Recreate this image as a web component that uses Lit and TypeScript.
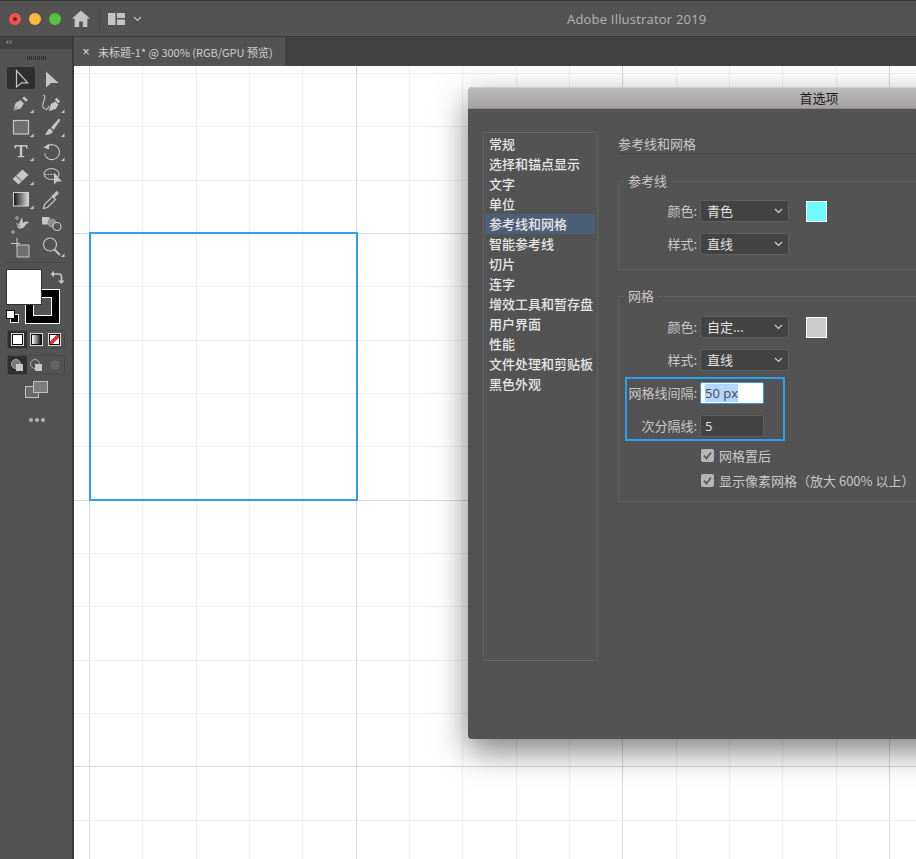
import { LitElement, css, html, svg } from 'lit';
import { customElement } from 'lit/decorators.js';

const GRID_STEP = 160 / 3;
const ICON = '#c6c6c6';

const corner = svg`<path d="M23 22h3.5v-3.5z" fill="${ICON}"/>`;

interface Tool {
  name: string;
  art: unknown;
  more?: boolean;
  active?: boolean;
}

const TOOLS: Tool[] = [
  { name: 'selection', active: true, art: svg`<path d="M9.5 3.5v16.5l5-4.2h6.2z" fill="none" stroke="${ICON}" stroke-width="1.2"/>` },
  { name: 'direct', art: svg`<path d="M8 4.5v16l5-4.4h7.5z" fill="${ICON}"/>` },
  { name: 'pen', more: true, art: svg`<path d="M6 20l2.3-8.2 5.2-3 3.6 3.6-3 5.2zM6.5 19.5l4.2-4.2M15 7.3l2.2-2.2 4 4-2.2 2.2z" fill="${ICON}" stroke="#535353" stroke-width=".7"/>` },
  { name: 'curvature', more: true, art: svg`<path d="M11 20l1.8-7 4.4-2.6 3.2 3.2-2.6 4.4zM16.8 8.8l1.8-2 3.6 3.6-2 1.8z" fill="${ICON}"/><path d="M5 4c5 2-2 8 0 12s5 3 6-1" fill="none" stroke="${ICON}" stroke-width="1.1"/>` },
  { name: 'rect', more: true, art: svg`<rect x="6.5" y="5.5" width="15" height="13.5" fill="#6f6f6f" stroke="${ICON}" stroke-width="1.2"/>` },
  { name: 'brush', more: true, art: svg`<path d="M20.5 4L13 12.5l2.6 2.4 6.4-9.4c.4-1-.7-2-1.5-1.5z" fill="${ICON}"/><path d="M12 13.5l2.8 2.6c-.6 3-3.8 4.2-8.3 3.6 2.5-1.200 2.200-4.800 5.500-6.200z" fill="${ICON}"/>` },
  { name: 'type', more: true, art: svg`<path d="M7.500 6h13v3.500h-1.200l-.6-2h-3.500v9.500h2v1.300h-6.400V17h2V7.500H9.300l-.6 2H7.500z" fill="${ICON}"/>` },
  { name: 'rotate', more: true, art: svg`<path d="M9 7.500a7.500 7.500 0 1 1-2.500 6" fill="none" stroke="${ICON}" stroke-width="1.100"/><path d="M6.500 13.500a7.500 7.500 0 0 0 13 3.500" fill="none" stroke="#535353" stroke-width="1.100" stroke-dasharray="1.500 1.500"/><path d="M5.500 8.500l5.500-4v6z" fill="${ICON}"/>` },
  { name: 'eraser', more: true, art: svg`<path d="M6 15.500L15.500 6.500l6 5.500-9.500 9z" fill="${ICON}"/><path d="M9 12.700l5.800 5.600" stroke="#535353" stroke-width="1"/><path d="M6 15.500l6 5.500" stroke="${ICON}" stroke-width="1.200"/>` },
  { name: 'shapebuilder', art: svg`<path d="M6 11a7.500 5.500 0 1 1 15 0 7.500 5.500 0 1 1-15 0z" fill="none" stroke="${ICON}" stroke-width="1.100"/><path d="M7 11.500h9" stroke="${ICON}" stroke-width="1.200" stroke-dasharray="1.500 1.200"/><path d="M16 9.500v12l3-3h5z" fill="${ICON}"/>` },
  { name: 'gradient', more: true, art: svg`<defs><linearGradient id="toolgrad"><stop offset="0" stop-color="#111"/><stop offset="1" stop-color="#ddd"/></linearGradient></defs><rect x="6.500" y="5.500" width="15" height="13.500" fill="url(#toolgrad)" stroke="#d0d0d0" stroke-width="1"/>` },
  { name: 'eyedropper', art: svg`<path d="M5.500 21.500l1-4 8-8 3 3-8 8z" fill="none" stroke="${ICON}" stroke-width="1.200"/><path d="M13.500 8.500l2 -1 2.500-3c1-1 3.500 1 2.500 2.500l-3 2.500-1 2z" fill="${ICON}"/>` },
  { name: 'puppet', art: svg`<path d="M6 21l5-4-2-6 3 2 3-7c.5 3 .5 5 1 6 2-2 5-2 6 0-2 0-3 1-4 3-2 3-5 3-7 2z" fill="${ICON}"/><circle cx="6" cy="21" r="1.300" fill="#535353" stroke="${ICON}" stroke-width=".8"/><circle cx="10" cy="7" r="1.300" fill="#535353" stroke="${ICON}" stroke-width=".8"/><path d="M9 11l4 5" stroke="#535353" stroke-width=".8"/>` },
  { name: 'blend', art: svg`<rect x="4" y="6" width="7.500" height="7.500" fill="${ICON}"/><circle cx="14" cy="12" r="4.500" fill="#8f8f8f"/><circle cx="19" cy="15.500" r="4" fill="#535353" stroke="${ICON}" stroke-width="1.200"/>` },
  { name: 'artboard', art: svg`<path d="M10 10h12v12H10z" fill="#6f6f6f" stroke="${ICON}" stroke-width="1"/><path d="M10 3v9M4 8.500h9" stroke="${ICON}" stroke-width="1"/>` },
  { name: 'zoom', more: true, art: svg`<circle cx="12" cy="9.500" r="6.500" fill="none" stroke="${ICON}" stroke-width="1.200"/><path d="M16.500 14.500l5.500 5.500" stroke="${ICON}" stroke-width="2"/>` },
];

const PREF_PAGES = [
  '常规', '选择和锚点显示', '文字', '单位', '参考线和网格', '智能参考线', '切片', '连字',
  '增效工具和暂存盘', '用户界面', '性能', '文件处理和剪贴板', '黑色外观',
];

@customElement('app-root')
export class AppRoot extends LitElement {
  static styles = css`
    :host {
      display: block;
      width: 916px;
      height: 859px;
      overflow: hidden;
      background: #535353;
      font-family: "Noto Sans CJK SC", "Noto Sans", sans-serif;
      font-size: 13px;
    }

    .window {
      display: flex;
      flex-direction: column;
      height: 100%;
    }

    /* title bar */
    .titlebar {
      flex: 0 0 37px;
      box-sizing: border-box;
      display: flex;
      align-items: center;
      background: #535353;
      border-top: 1px solid #3a3a3a;
      border-bottom: 1px solid #3c3c3c;
      padding-left: 9px;
    }
    .light {
      width: 12px;
      height: 12px;
      border-radius: 50%;
      margin-right: 8px;
      display: flex;
      align-items: center;
      justify-content: center;
    }
    .light.red { background: #f0534f; }
    .light.red::after {
      content: '';
      width: 4px;
      height: 4px;
      border-radius: 50%;
      background: #7d1a16;
    }
    .light.amber { background: #f8b73d; }
    .light.green { background: #55c13f; }
    .home { margin-left: 3px; }
    .divider {
      width: 1px;
      height: 21px;
      background: #474747;
      margin: 0 8px 0 9px;
    }
    .chev { margin-left: 7px; }
    .app-title {
      margin-left: 425px;
      color: #b4b4b4;
      font-family: "Open Sans", "Noto Sans", sans-serif;
      font-size: 13px;
      letter-spacing: 0.2px;
    }

    .body {
      flex: 1;
      display: flex;
      min-height: 0;
    }

    /* tools */
    .toolbar {
      flex: 0 0 72px;
      background: #535353;
      display: flex;
      flex-direction: column;
      align-items: stretch;
    }
    .collapse {
      height: 12px;
      background: #434343;
      color: #b0b0b0;
      font-size: 9px;
      line-height: 11px;
      padding-left: 6px;
      font-family: "Liberation Sans", sans-serif;
    }
    .grip {
      height: 18px;
      display: flex;
      justify-content: center;
      align-items: center;
      gap: 1px;
    }
    .grip span {
      width: 1px;
      height: 4px;
      background: #2f2f2f;
    }
    .tools {
      display: grid;
      grid-template-columns: 28px 28px;
      grid-auto-rows: 24px;
      column-gap: 3px;
      padding-left: 7px;
    }
    .tool {
      width: 28px;
      height: 24px;
      border-radius: 2px;
      display: block;
    }
    .tool.active {
      background: #2f2f2f;
      height: 22px;
      overflow: hidden;
    }
    .rule {
      height: 1px;
      background: #474747;
      margin: 3px 6px 0;
    }
    .colors {
      position: relative;
      height: 61px;
    }
    .fill, .stroke {
      position: absolute;
      box-sizing: border-box;
    }
    .fill {
      left: 6px;
      top: 6px;
      width: 36px;
      height: 36px;
      background: #fff;
      border: 1px solid #333;
      z-index: 1;
    }
    .stroke {
      left: 25px;
      top: 26px;
      width: 35px;
      height: 35px;
      background: #000;
      border: 1px solid #fff;
    }
    .stroke::after {
      content: '';
      position: absolute;
      left: 7px;
      top: 7px;
      width: 19px;
      height: 19px;
      background: #535353;
      border: 1px solid #fff;
      box-sizing: border-box;
    }
    .swap { position: absolute; left: 50px; top: 7px; }
    .defaults { position: absolute; left: 6px; top: 47px; }
    .btn-row {
      display: flex;
      box-sizing: border-box;
      margin: 6px 7px 0;
      width: 58px;
      height: 19px;
      border: 1px solid #484848;
      border-radius: 2px;
    }
    .btn-row.draw { height: 20px; margin-top: 6px; }
    .btn-row > div {
      flex: 1;
      display: flex;
      align-items: center;
      justify-content: center;
    }
    .btn-row > div.on { background: #303030; }
    .mode {
      width: 11px;
      height: 11px;
      box-sizing: border-box;
      border: 1px solid #111;
      outline: 1px solid #d8d8d8;
    }
    .mode.white { background: #fff; }
    .mode.grad { background: linear-gradient(90deg, #fff, #111); }
    .mode.none {
      background: linear-gradient(135deg, #fff 38%, #e8322c 38%, #e8322c 62%, #fff 62%);
    }
    .screen { display: block; margin: 6px 0 0 25px; }
    .dots {
      display: flex;
      gap: 2px;
      margin: 20px 0 0 29px;
    }
    .dots span {
      width: 4px;
      height: 4px;
      border-radius: 50%;
      background: #b4b4b4;
    }

    /* document */
    .doc {
      flex: 1;
      min-width: 0;
      display: flex;
      flex-direction: column;
      border-left: 2px solid #3a3a3a;
    }
    .tabbar {
      flex: 0 0 29px;
      background: #424242;
      display: flex;
    }
    .tab {
      width: 211px;
      background: #535353;
      display: flex;
      align-items: center;
      color: #cfcfcf;
      font-size: 11px;
      white-space: nowrap;
    }
    .tab .close {
      width: 24px;
      text-align: center;
      font-family: "Liberation Sans", sans-serif;
      font-size: 12px;
      color: #e0e0e0;
    }
    .canvas {
      flex: 1;
      position: relative;
      background: #fff;
      overflow: hidden;
    }
    .grid {
      position: absolute;
      inset: 0;
      width: 100%;
      height: 100%;
    }
    .artboard {
      position: absolute;
      left: 15px;
      top: 166px;
      width: 269px;
      height: 269px;
      box-sizing: border-box;
      border: 2px solid #2c9ff0;
    }

    /* preferences */
    .dialog {
      position: absolute;
      left: 394px;
      top: 21px;
      width: 702px;
      height: 652px;
      display: flex;
      flex-direction: column;
      background: #535353;
      border-radius: 5px 5px 4px 4px;
      box-shadow: 0 12px 32px rgba(0, 0, 0, 0.5);
      overflow: hidden;
    }
    .dialog-title {
      flex: 0 0 22px;
      box-sizing: border-box;
      background: linear-gradient(#bcbabb, #a3a1a2);
      border-top: 1px solid #cfcfcf;
      border-bottom: 1px solid #8b8b8b;
      text-align: center;
      color: #1c1c1c;
      font-size: 13px;
      line-height: 20px;
    }
    .dialog-body {
      flex: 1;
      display: flex;
      gap: 20px;
      padding: 23px 0 0 15px;
    }
    .pages {
      box-sizing: border-box;
      width: 115px;
      height: 529px;
      padding: 1px;
      border: 1px solid #616161;
      border-radius: 2px;
      color: #e6e6e6;
      font-weight: 500;
    }
    .pages div {
      height: 20px;
      line-height: 20px;
      padding-left: 4px;
      white-space: nowrap;
    }
    .pages div.sel {
      background: #4b6078;
      margin-right: 1px;
    }
    .pane {
      flex: 1;
      color: #c8c8c8;
    }
    .pane h2 {
      margin: 0;
      box-sizing: border-box;
      height: 22px;
      padding-top: 2px;
      font-size: 13px;
      font-weight: 400;
      line-height: 20px;
      border-bottom: 1px solid #474747;
    }
    fieldset {
      margin: 18px 0 0;
      padding: 10px 0 14px;
      border: 1px solid #616161;
      border-radius: 3px;
      min-width: 0;
    }
    fieldset + fieldset {
      margin-top: 17px;
      padding: 11px 0 12px;
    }
    legend {
      margin-left: 5px;
      padding: 0 4px;
      line-height: 18px;
      height: 18px;
    }
    .row {
      display: grid;
      grid-template-columns: 78px 89px 11px 21px;
      column-gap: 3px;
      align-items: center;
      height: 22px;
      margin-bottom: 11px;
      white-space: nowrap;
    }
    .row:last-child { margin-bottom: 0; }
    .row label { text-align: right; line-height: 22px; }
    .select {
      box-sizing: border-box;
      height: 22px;
      background: #434343;
      border: 1px solid #5f5f5f;
      border-radius: 3px;
      color: #e2e2e2;
      padding-left: 6px;
      line-height: 20px;
      display: flex;
      justify-content: space-between;
      align-items: center;
    }
    .select svg { margin-right: 5px; }
    .swatch {
      grid-column: 4;
      box-sizing: border-box;
      width: 21px;
      height: 21px;
      border: 1px solid #fff;
    }
    .input {
      box-sizing: border-box;
      width: 64px;
      height: 22px;
      background: #434343;
      border: 1px solid #5c5c5c;
      border-radius: 2px;
      color: #e2e2e2;
      padding-left: 4px;
      line-height: 20px;
      font-family: "Open Sans", "Noto Sans", sans-serif;
    }
    .input.focus {
      background: #fff;
      border-color: #3d95e8;
      color: #4a4a4a;
    }
    .input.focus span { background: #b4d5fe; }
    .marked {
      position: relative;
      width: 166px;
    }
    .marked::after {
      content: '';
      position: absolute;
      left: 6px;
      right: 0;
      top: -5px;
      bottom: -4px;
      border: 2px solid #2c9ff0;
    }
    .marked .row { margin-bottom: 11px; }
    .marked .row:last-child { margin-bottom: 0; }
    .check {
      display: flex;
      align-items: center;
      gap: 5px;
      margin: 7px 0 0 82px;
      height: 18px;
      white-space: nowrap;
    }
    .marked + .check { margin-top: 9px; }
    .box {
      flex: 0 0 13px;
      height: 13px;
      border-radius: 2px;
      background: #b6b6b6;
      display: block;
    }
  `;

  private renderGrid() {
    const vertical = Array.from({ length: 16 }, (_, k) => 15.5 + k * GRID_STEP);
    const horizontal = Array.from({ length: 15 }, (_, k) => 167.5 + (k - 3) * GRID_STEP);
    return html`
      <svg class="grid" shape-rendering="crispEdges">
        ${vertical.map((x, k) => svg`<line x1=${x} x2=${x} y1="0" y2="800" stroke=${k % 5 === 0 ? '#d9d9d9' : '#efefef'} />`)}
        ${horizontal.map((y, k) => svg`<line x1="0" x2="850" y1=${y} y2=${y} stroke=${k % 5 === 3 ? '#d9d9d9' : '#efefef'} />`)}
      </svg>
    `;
  }

  private renderSelect(value: string) {
    return html`
      <div class="select">
        <span>${value}</span>
        <svg width="9" height="6" viewBox="0 0 9 6"><path d="M1 1l3.500 3.500L8 1" fill="none" stroke="#d0d0d0" stroke-width="1.100"/></svg>
      </div>
    `;
  }

  private renderCheck(text: string) {
    return html`
      <div class="check">
        <svg class="box" viewBox="0 0 13 13"><path d="M3 6.500l2.500 3L10 3.500" fill="none" stroke="#5a5a5a" stroke-width="1.800"/></svg>
        <span>${text}</span>
      </div>
    `;
  }

  private renderToolbar() {
    return html`
      <aside class="toolbar">
        <div class="collapse">‹‹</div>
        <div class="grip">${Array.from({ length: 10 }, () => html`<span></span>`)}</div>
        <div class="tools">
          ${TOOLS.map(
            (t) => html`<svg class="tool ${t.active ? 'active' : ''}" viewBox="0 0 28 ${t.active ? 22 : 24}" aria-label=${t.name}>
              ${t.art}${t.more ? corner : null}
            </svg>`
          )}
        </div>
        <div class="rule"></div>
        <div class="colors">
          <div class="fill"></div>
          <div class="stroke"></div>
          <svg class="swap" width="14" height="15" viewBox="0 0 14 15">
            <path d="M3 4h5.500c2 0 3 1 3 3v5" fill="none" stroke="#c6c6c6" stroke-width="1.600"/>
            <path d="M4 .8L.6 4 4 7.200zM8 10.500l3.500 3.500 3-3.500z" fill="#c6c6c6"/>
          </svg>
          <svg class="defaults" width="13" height="13" viewBox="0 0 13 13">
            <rect x="4.500" y="4.500" width="8" height="8" fill="#000" stroke="#e8e8e8"/>
            <rect x=".5" y=".5" width="8" height="8" fill="#fff" stroke="#111"/>
          </svg>
        </div>
        <div class="btn-row">
          <div class="on"><div class="mode white"></div></div>
          <div><div class="mode grad"></div></div>
          <div><div class="mode none"></div></div>
        </div>
        <div class="btn-row draw">
          <div class="on">
            <svg width="14" height="14" viewBox="0 0 14 14"><circle cx="6" cy="6" r="4.500" fill="#777" stroke="#aaa"/><rect x="6" y="6" width="7" height="7" fill="#c8c8c8"/></svg>
          </div>
          <div>
            <svg width="14" height="14" viewBox="0 0 14 14"><circle cx="6" cy="6" r="4.500" fill="none" stroke="#aaa"/><rect x="6" y="6" width="7" height="7" fill="#c8c8c8"/></svg>
          </div>
          <div>
            <svg width="12" height="12" viewBox="0 0 12 12"><circle cx="6" cy="6" r="4" fill="#626262" stroke="#6c6c6c"/></svg>
          </div>
        </div>
        <svg class="screen" width="23" height="17" viewBox="0 0 23 17">
          <rect x=".5" y="5.500" width="13" height="11" fill="#6a6a6a" stroke="#c0c0c0"/>
          <rect x="8.500" y=".5" width="14" height="11" fill="#7c7c7c" stroke="#c0c0c0"/>
        </svg>
        <div class="dots"><span></span><span></span><span></span></div>
      </aside>
    `;
  }

  private renderDialog() {
    return html`
      <section class="dialog">
        <div class="dialog-title">首选项</div>
        <div class="dialog-body">
          <nav class="pages">
            ${PREF_PAGES.map((p) => html`<div class=${p === '参考线和网格' ? 'sel' : ''}>${p}</div>`)}
          </nav>
          <div class="pane">
            <h2>参考线和网格</h2>
            <fieldset>
              <legend>参考线</legend>
              <div class="row">
                <label>颜色:</label>${this.renderSelect('青色')}
                <div class="swatch" style="background:#6ffbff"></div>
              </div>
              <div class="row"><label>样式:</label>${this.renderSelect('直线')}</div>
            </fieldset>
            <fieldset>
              <legend>网格</legend>
              <div class="row">
                <label>颜色:</label>${this.renderSelect('自定...')}
                <div class="swatch" style="background:#cccccc"></div>
              </div>
              <div class="row"><label>样式:</label>${this.renderSelect('直线')}</div>
              <div class="marked">
                <div class="row">
                  <label>网格线间隔:</label>
                  <div class="input focus"><span>50 px</span></div>
                </div>
                <div class="row">
                  <label>次分隔线:</label>
                  <div class="input">5</div>
                </div>
              </div>
              ${this.renderCheck('网格置后')}
              ${this.renderCheck('显示像素网格（放大 600% 以上）')}
            </fieldset>
          </div>
        </div>
      </section>
    `;
  }

  protected render() {
    return html`
      <div class="window">
        <header class="titlebar">
          <div class="light red"></div>
          <div class="light amber"></div>
          <div class="light green"></div>
          <svg class="home" width="18" height="17" viewBox="0 0 18 17">
            <path d="M9 .5L0 8.500h2.600V17h4.600v-5.500h3.600V17h4.600V8.500H18z" fill="#c4c4c4"/>
          </svg>
          <div class="divider"></div>
          <svg width="17" height="12" viewBox="0 0 17 12">
            <path d="M0 0h7.500v12H0zM9 0h8v5H9zM9 6.500h8V12H9z" fill="#c4c4c4"/>
          </svg>
          <svg class="chev" width="9" height="6" viewBox="0 0 9 6" style="margin-left:8px">
            <path d="M1 1l3.500 3.500L8 1" fill="none" stroke="#c4c4c4" stroke-width="1.100"/>
          </svg>
          <div class="app-title">Adobe Illustrator 2019</div>
        </header>
        <div class="body">
          ${this.renderToolbar()}
          <main class="doc">
            <div class="tabbar">
              <div class="tab"><span class="close">×</span><span>未标题-1* @ 300% (RGB/GPU 预览)</span></div>
            </div>
            <div class="canvas">
              ${this.renderGrid()}
              <div class="artboard"></div>
              ${this.renderDialog()}
            </div>
          </main>
        </div>
      </div>
    `;
  }
}
